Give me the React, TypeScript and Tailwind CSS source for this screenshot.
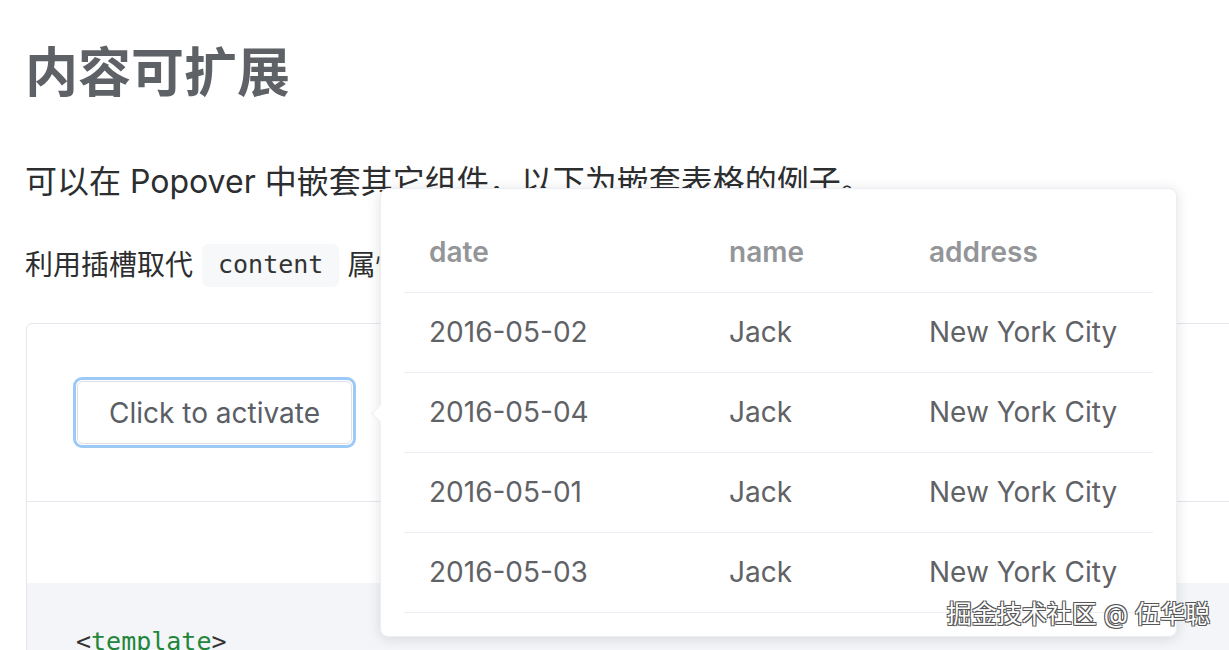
import React from 'react';

const rows = [
  { date: '2016-05-02', name: 'Jack', address: 'New York City' },
  { date: '2016-05-04', name: 'Jack', address: 'New York City' },
  { date: '2016-05-01', name: 'Jack', address: 'New York City' },
  { date: '2016-05-03', name: 'Jack', address: 'New York City' },
];

const sans = "font-['Inter','Noto_Sans_CJK_SC',sans-serif]";

const Popover = () => (
  <div className="absolute left-[380px] top-[188px] w-[797px] h-[449px] bg-white rounded-lg border border-[#ebeef5] shadow-[0_2px_14px_rgba(0,0,0,0.12)] px-[23px] pt-[23px]">
    {/* arrow */}
    <div className="absolute left-[-7px] top-[218px] w-[13px] h-[13px] bg-white rotate-45 border-l border-b border-[#ebeef5]" />
    <table className="w-full border-collapse text-[28px]">
      <thead>
        <tr className="h-[80px] border-b border-[#ebeef5] text-left">
          <th className="w-[300px] pl-[25px] font-semibold text-[#939599]">date</th>
          <th className="w-[200px] pl-[25px] font-semibold text-[#939599]">name</th>
          <th className="pl-[25px] font-semibold text-[#939599]">address</th>
        </tr>
      </thead>
      <tbody>
        {rows.map((r) => (
          <tr key={r.date} className="h-[80px] border-b border-[#ebeef5] text-[#606266]">
            <td className="pl-[25px]">{r.date}</td>
            <td className="pl-[25px]">{r.name}</td>
            <td className="pl-[25px]">{r.address}</td>
          </tr>
        ))}
      </tbody>
    </table>
  </div>
);

export default function App() {
  return (
    <div className={`relative w-[1229px] h-[650px] overflow-hidden bg-white ${sans}`}>
      <div className="pl-[25px] pt-[41px] flex flex-col">
        <h1 className="text-[53px] leading-[64px] font-bold text-[#5e6166]">内容可扩展</h1>

        <p className="mt-[57px] text-[32px] leading-[40px] text-[#2c2e30]">
          可以在 Popover 中嵌套其它组件，以下为嵌套表格的例子。
        </p>

        <div className="mt-[41px] flex items-center h-[44px] text-[28px] text-[#2c2e30]">
          <span>利用插槽取代</span>
          <code className="ml-[9px] mr-[8px] h-[43px] px-[16px] flex items-center rounded-md bg-[#f6f8fa] text-[25px] text-[#333] font-['DejaVu_Sans_Mono',monospace]">
            content
          </code>
          <span>属性。</span>
        </div>

        {/* demo block */}
        <div className="mt-[36px] ml-[1px] w-[1240px] border border-[#e4e7ed] rounded-t-md">
          <div className="h-[178px] flex items-center pl-[46px] border-b border-[#e4e7ed]">
            <div className="rounded-[9px] border-[3px] border-[#9cc9f5] p-[1px] bg-white">
              <button className="h-[63px] px-[31px] rounded-[6px] border border-[#dcdfe6] bg-white text-[28px] text-[#5a5e66]">
                Click to activate
              </button>
            </div>
          </div>
          <div className="h-[81px] bg-white" />
          <div className="h-[120px] bg-[#f3f5f8] pl-[49px] pt-[40px] text-[25px] font-['DejaVu_Sans_Mono',monospace]">
            <span className="text-[#333]">&lt;</span>
            <span className="text-[#22863a]">template</span>
            <span className="text-[#333]">&gt;</span>
          </div>
        </div>
      </div>

      <Popover />

      {/* watermark */}
      <div className="absolute right-[19px] top-[597px] text-[25px] leading-[34px] text-white [text-shadow:1px_1px_0_#555,-1px_-1px_0_#555,1px_-1px_0_#555,-1px_1px_0_#555]">
        掘金技术社区 @ 伍华聪
      </div>
    </div>
  );
}
